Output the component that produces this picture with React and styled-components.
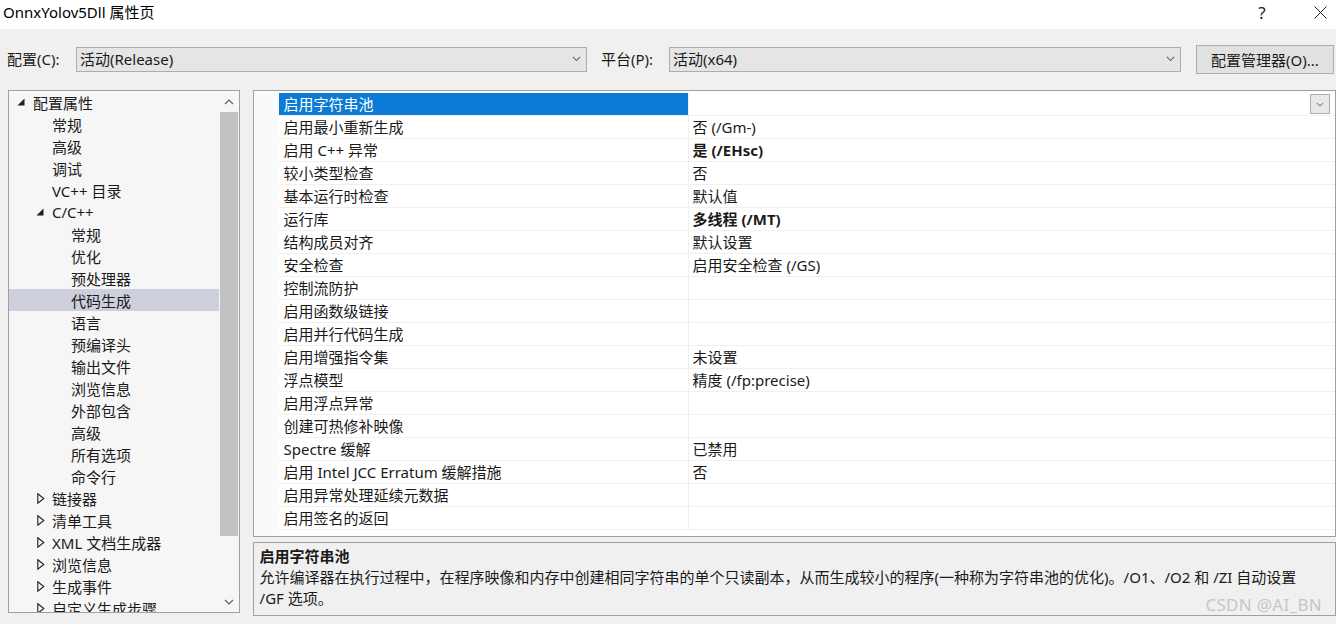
import styled, { createGlobalStyle } from "styled-components";

const GlobalStyle = createGlobalStyle`
  html, body {
    margin: 0;
    padding: 0;
    background: #f0f0f0;
  }
  body {
    font-family: "Noto Sans", "Noto Sans CJK SC", sans-serif;
    font-size: 15px;
    color: #1a1a1a;
  }
`;

const Window = styled.div`
  width: 1336px;
  height: 624px;
  overflow: hidden;
  position: relative;
  display: flex;
  flex-direction: column;
  background: #f0f0f0;
`;

const TitleBar = styled.div`
  height: 29px;
  background: #ffffff;
  display: flex;
  align-items: flex-start;
  padding-left: 3px;
`;

const Title = styled.div`
  flex: 1;
  line-height: 24px;
  font-size: 15px;
  color: #000;
`;

const TitleButton = styled.div`
  width: ${(p) => p.$w}px;
  height: 24px;
  display: flex;
  align-items: center;
  justify-content: center;
  font-size: 17px;
  color: #222;
`;

const ConfigRow = styled.div`
  display: flex;
  align-items: center;
  height: 30px;
  margin-top: 15px;
  padding-left: 7px;
`;

const Label = styled.div`
  width: ${(p) => p.$w}px;
  line-height: 20px;
`;

const Combo = styled.div`
  width: ${(p) => p.$w}px;
  height: 25px;
  box-sizing: border-box;
  border: 1px solid #adadad;
  background: #e5e5e5;
  display: flex;
  align-items: center;
  padding: 0 5px 0 3px;
  margin-right: ${(p) => p.$mr}px;
`;

const ComboText = styled.div`
  flex: 1;
  line-height: 20px;
`;

const Button = styled.div`
  width: 138px;
  height: 29px;
  box-sizing: border-box;
  border: 1px solid #adadad;
  background: #e1e1e1;
  display: flex;
  align-items: center;
  justify-content: center;
`;

const Body = styled.div`
  display: flex;
  margin-top: 16px;
  padding-left: 8px;
  gap: 13px;
`;

const TreePanel = styled.div`
  width: 233px;
  height: 523px;
  box-sizing: border-box;
  border: 1px solid #a0a0a0;
  background: #f6f6f6;
  display: flex;
  overflow: hidden;
`;

const TreeList = styled.div`
  flex: 1;
  overflow: hidden;
`;

const TreeRow = styled.div`
  height: 22px;
  display: flex;
  align-items: center;
  padding-left: ${(p) => 8 + p.$level * 19}px;
  background: ${(p) => (p.$selected ? "#cdd0dc" : "transparent")};
  white-space: nowrap;
`;

const Toggle = styled.div`
  width: 16px;
  flex: none;
  display: flex;
  align-items: center;
  padding-left: ${(p) => (p.$open ? 0 : 1)}px;
  box-sizing: border-box;
`;

const Scrollbar = styled.div`
  width: 20px;
  display: flex;
  flex-direction: column;
  align-items: center;
  background: #f6f6f6;
`;

const ScrollArrow = styled.div`
  height: 21px;
  width: 100%;
  display: flex;
  align-items: center;
  justify-content: center;
`;

const ScrollThumb = styled.div`
  width: 18px;
  height: 424px;
  background: #c2c2c2;
`;

const ScrollTrack = styled.div`
  flex: 1;
`;

const RightColumn = styled.div`
  width: 1090px;
  display: flex;
  flex-direction: column;
  gap: 5px;
`;

const GridPanel = styled.div`
  height: 447px;
  box-sizing: border-box;
  border: 1px solid #a0a0a0;
  background: #ffffff;
  padding-top: 2px;
  display: flex;
`;

const Gutter = styled.div`
  width: 25px;
  background: #fafafa;
`;

const GridRows = styled.div`
  flex: 1;
  display: flex;
  flex-direction: column;
`;

const GridRow = styled.div`
  height: 23px;
  display: flex;
  border-bottom: 1px solid #f0f0f0;
  box-sizing: border-box;
`;

const NameCell = styled.div`
  width: 410px;
  box-sizing: border-box;
  padding-left: 5px;
  line-height: 23px;
  background: ${(p) => (p.$selected ? "#0b7bd6" : "transparent")};
  color: ${(p) => (p.$selected ? "#ffffff" : "inherit")};
  border-right: 1px solid #f0f0f0;
  white-space: nowrap;
`;

const ValueCell = styled.div`
  flex: 1;
  display: flex;
  align-items: center;
  padding-left: 4px;
  padding-right: 5px;
  line-height: 23px;
  font-weight: ${(p) => (p.$bold ? 700 : 400)};
  white-space: nowrap;
`;

const ValueText = styled.div`
  flex: 1;
`;

const DropButton = styled.div`
  width: 20px;
  height: 20px;
  box-sizing: border-box;
  border: 1px solid #adadad;
  background: #e9e9e9;
  display: flex;
  align-items: center;
  justify-content: center;
`;

const DescPanel = styled.div`
  height: 74px;
  box-sizing: border-box;
  border: 1px solid #a0a0a0;
  background: #f0f0f0;
  padding: 2px 6px 0 6px;
`;

const DescTitle = styled.div`
  font-weight: 700;
  line-height: 22px;
`;

const DescText = styled.div`
  line-height: 21px;
`;

const Watermark = styled.div`
  position: absolute;
  right: 14px;
  bottom: 8px;
  font-family: "Noto Sans", sans-serif;
  font-size: 17px;
  color: #c6c6c6;
  letter-spacing: 0.3px;
`;

const Chevron = ({ up, size = 9, color = "#606060" }) => (
  <svg width={size} height={size / 2 + 1} viewBox="0 0 10 6">
    <polyline
      points={up ? "1,5 5,1 9,5" : "1,1 5,5 9,1"}
      fill="none"
      stroke={color}
      strokeWidth="1.2"
    />
  </svg>
);

const Expanded = () => (
  <svg width="8" height="8" viewBox="0 0 8 8">
    <polygon points="7.5,0.5 7.5,7.5 0.5,7.5" fill="#1e1e1e" />
  </svg>
);

const Collapsed = () => (
  <svg width="8" height="11" viewBox="0 0 8 11">
    <polygon points="0.8,0.8 6.8,5.5 0.8,10.2" fill="none" stroke="#1e1e1e" strokeWidth="1.1" />
  </svg>
);

const CloseIcon = () => (
  <svg width="13" height="13" viewBox="0 0 13 13">
    <line x1="0.5" y1="0.5" x2="12.5" y2="12.5" stroke="#222" strokeWidth="1" />
    <line x1="12.5" y1="0.5" x2="0.5" y2="12.5" stroke="#222" strokeWidth="1" />
  </svg>
);

const tree = [
  { level: 0, text: "配置属性", toggle: "open" },
  { level: 1, text: "常规" },
  { level: 1, text: "高级" },
  { level: 1, text: "调试" },
  { level: 1, text: "VC++ 目录" },
  { level: 1, text: "C/C++", toggle: "open" },
  { level: 2, text: "常规" },
  { level: 2, text: "优化" },
  { level: 2, text: "预处理器" },
  { level: 2, text: "代码生成", selected: true },
  { level: 2, text: "语言" },
  { level: 2, text: "预编译头" },
  { level: 2, text: "输出文件" },
  { level: 2, text: "浏览信息" },
  { level: 2, text: "外部包含" },
  { level: 2, text: "高级" },
  { level: 2, text: "所有选项" },
  { level: 2, text: "命令行" },
  { level: 1, text: "链接器", toggle: "closed" },
  { level: 1, text: "清单工具", toggle: "closed" },
  { level: 1, text: "XML 文档生成器", toggle: "closed" },
  { level: 1, text: "浏览信息", toggle: "closed" },
  { level: 1, text: "生成事件", toggle: "closed" },
  { level: 1, text: "自定义生成步骤", toggle: "closed" },
];

const props = [
  { name: "启用字符串池", value: "", selected: true },
  { name: "启用最小重新生成", value: "否 (/Gm-)" },
  { name: "启用 C++ 异常", value: "是 (/EHsc)", bold: true },
  { name: "较小类型检查", value: "否" },
  { name: "基本运行时检查", value: "默认值" },
  { name: "运行库", value: "多线程 (/MT)", bold: true },
  { name: "结构成员对齐", value: "默认设置" },
  { name: "安全检查", value: "启用安全检查 (/GS)" },
  { name: "控制流防护", value: "" },
  { name: "启用函数级链接", value: "" },
  { name: "启用并行代码生成", value: "" },
  { name: "启用增强指令集", value: "未设置" },
  { name: "浮点模型", value: "精度 (/fp:precise)" },
  { name: "启用浮点异常", value: "" },
  { name: "创建可热修补映像", value: "" },
  { name: "Spectre 缓解", value: "已禁用" },
  { name: "启用 Intel JCC Erratum 缓解措施", value: "否" },
  { name: "启用异常处理延续元数据", value: "" },
  { name: "启用签名的返回", value: "" },
];

function App() {
  return (
    <>
      <GlobalStyle />
      <Window>
        <TitleBar>
          <Title>OnnxYolov5Dll 属性页</Title>
          <TitleButton $w={46}>?</TitleButton>
          <TitleButton $w={19} />
          <TitleButton $w={32}>
            <CloseIcon />
          </TitleButton>
        </TitleBar>

        <ConfigRow>
          <Label $w={69}>配置(C):</Label>
          <Combo $w={511} $mr={14}>
            <ComboText>活动(Release)</ComboText>
            <Chevron />
          </Combo>
          <Label $w={68}>平台(P):</Label>
          <Combo $w={512} $mr={15}>
            <ComboText>活动(x64)</ComboText>
            <Chevron />
          </Combo>
          <Button>配置管理器(O)...</Button>
        </ConfigRow>

        <Body>
          <TreePanel>
            <TreeList>
              {tree.map((item, i) => (
                <TreeRow key={i} $level={item.level} $selected={item.selected}>
                  <Toggle $open={item.toggle === "open"}>
                    {item.toggle === "open" ? <Expanded /> : null}
                    {item.toggle === "closed" ? <Collapsed /> : null}
                  </Toggle>
                  {item.text}
                </TreeRow>
              ))}
            </TreeList>
            <Scrollbar>
              <ScrollArrow>
                <Chevron up size={10} />
              </ScrollArrow>
              <ScrollThumb />
              <ScrollTrack />
              <ScrollArrow>
                <Chevron size={10} />
              </ScrollArrow>
            </Scrollbar>
          </TreePanel>

          <RightColumn>
            <GridPanel>
              <Gutter />
              <GridRows>
                {props.map((p, i) => (
                  <GridRow key={i}>
                    <NameCell $selected={p.selected}>{p.name}</NameCell>
                    <ValueCell $bold={p.bold}>
                      <ValueText>{p.value}</ValueText>
                      {p.selected ? (
                        <DropButton>
                          <Chevron size={8} />
                        </DropButton>
                      ) : null}
                    </ValueCell>
                  </GridRow>
                ))}
              </GridRows>
            </GridPanel>
            <DescPanel>
              <DescTitle>启用字符串池</DescTitle>
              <DescText>
                允许编译器在执行过程中，在程序映像和内存中创建相同字符串的单个只读副本，从而生成较小的程序(一种称为字符串池的优化)。/O1、/O2 和 /ZI 自动设置
              </DescText>
              <DescText>/GF 选项。</DescText>
            </DescPanel>
          </RightColumn>
        </Body>
        <Watermark>CSDN @AI_BN</Watermark>
      </Window>
    </>
  );
}

export default App;
